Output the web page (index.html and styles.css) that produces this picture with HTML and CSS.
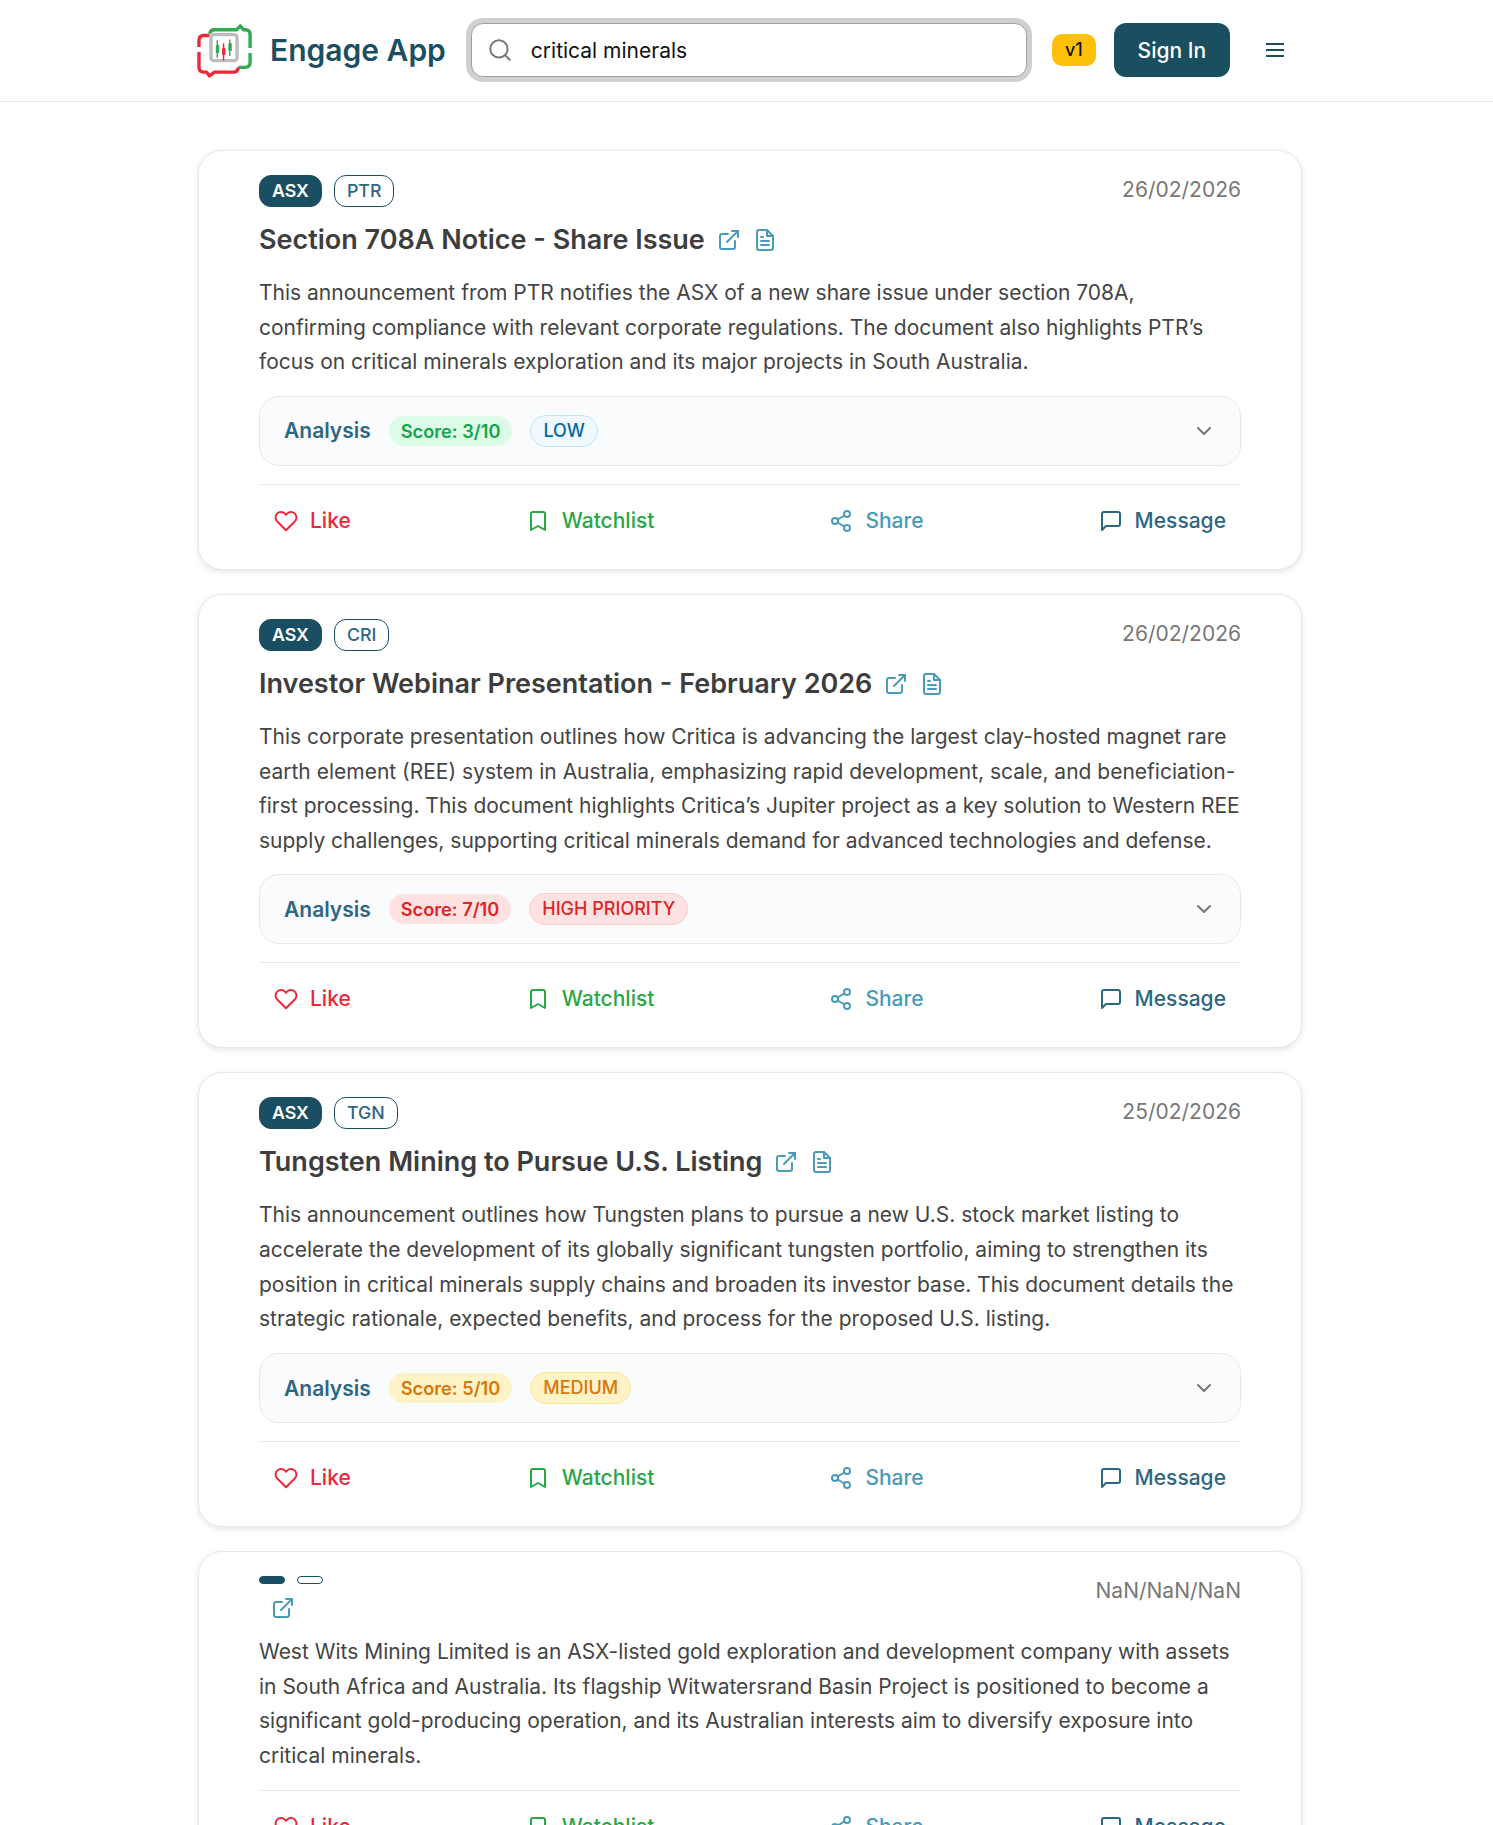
FILE: index.html
```html
<!DOCTYPE html>
<html lang="en">
<head>
    <meta charset="UTF-8">
    <meta name="viewport" content="width=device-width, initial-scale=1.0">
    <title>Engage App</title>
    <link rel="stylesheet" href="styles.css">
</head>
<body>
    <svg class="icon-defs" aria-hidden="true">
        <symbol id="i-external" viewBox="0 0 24 24"><path d="M18 13v6a2 2 0 0 1-2 2H5a2 2 0 0 1-2-2V8a2 2 0 0 1 2-2h6"/><path d="M15 3h6v6"/><path d="M10 14 21 3"/></symbol>
        <symbol id="i-doc" viewBox="0 0 24 24"><path d="M14 2H6a2 2 0 0 0-2 2v16a2 2 0 0 0 2 2h12a2 2 0 0 0 2-2V8z"/><path d="M14 2v6h6"/><path d="M8 13h8"/><path d="M8 17h8"/><path d="M8 9h2"/></symbol>
        <symbol id="i-heart" viewBox="0 0 24 24"><path d="M20.84 4.61a5.5 5.5 0 0 0-7.78 0L12 5.67l-1.06-1.06a5.5 5.5 0 0 0-7.78 7.78l1.06 1.06L12 21.23l7.78-7.78 1.06-1.06a5.5 5.5 0 0 0 0-7.78z"/></symbol>
        <symbol id="i-bookmark" viewBox="0 0 24 24"><path d="m19 21-7-4-7 4V5a2 2 0 0 1 2-2h10a2 2 0 0 1 2 2z"/></symbol>
        <symbol id="i-share" viewBox="0 0 24 24"><circle cx="18" cy="5" r="3"/><circle cx="6" cy="12" r="3"/><circle cx="18" cy="19" r="3"/><path d="m8.6 13.5 6.8 4"/><path d="m15.4 6.5-6.8 4"/></symbol>
        <symbol id="i-message" viewBox="0 0 24 24"><path d="M21 15a2 2 0 0 1-2 2H7l-4 4V5a2 2 0 0 1 2-2h14a2 2 0 0 1 2 2z"/></symbol>
        <symbol id="i-chevron" viewBox="0 0 24 24"><path d="m6 9 6 6 6-6"/></symbol>
    </svg>

    <header class="topbar">
        <div class="topbar-inner">
            <a class="brand" href="#">
                <svg class="logo" viewBox="0 0 56 56">
                    <path class="logo-green" d="M12 11 Q13 7 17 7 H40 L44 3 L47 7 H49 Q54 7 54 12 V26 M54 31 V41 Q54 46 49 46 H42"/>
                    <path class="logo-red" d="M42 46 Q41 51 37 51 H17 L12 55 L9 51 H6 Q1 51 1 46 V30 M1 25 V18 Q1 13 6 13 H12"/>
                    <rect class="logo-frame" x="13.5" y="12" width="27" height="27" rx="3"/>
                    <path class="logo-candle-green" d="M20 18 V36 M33 17 V34"/>
                    <path class="logo-candle-red" d="M26.500 21 V39"/>
                    <rect class="logo-body-green" x="18.500" y="23" width="3.500" height="8"/>
                    <rect class="logo-body-red" x="25" y="26" width="3.500" height="7"/>
                    <rect class="logo-body-green" x="31.500" y="21" width="3.500" height="8"/>
                </svg>
                <span class="brand-name">Engage App</span>
            </a>
            <div class="search">
                <svg class="search-icon" viewBox="0 0 24 24"><circle cx="11" cy="11" r="8"/><path d="m21 21-4.300-4.300"/></svg>
                <input class="search-input" type="text" value="critical minerals">
            </div>
            <span class="version">v1</span>
            <button class="signin">Sign In</button>
            <button class="menu" aria-label="Menu">
                <span></span><span></span><span></span>
            </button>
        </div>
    </header>

    <main class="feed">
        <article class="card">
            <div class="tags"><span class="tag tag-solid">ASX</span><span class="tag">PTR</span></div>
            <span class="date">26/02/2026</span>
            <h2 class="title">Section 708A Notice - Share Issue
                <svg class="title-icon"><use href="#i-external"/></svg>
                <svg class="title-icon"><use href="#i-doc"/></svg>
            </h2>
            <p class="summary">This announcement from PTR notifies the ASX of a new share issue under section 708A, confirming compliance with relevant corporate regulations. The document also highlights PTR’s focus on critical minerals exploration and its major projects in South Australia.</p>
            <div class="analysis">
                <span class="analysis-label">Analysis</span>
                <span class="score score-low">Score: 3/10</span>
                <span class="level level-low">LOW</span>
                <svg class="chevron"><use href="#i-chevron"/></svg>
            </div>
            <div class="actions">
                <button class="action like"><svg><use href="#i-heart"/></svg>Like</button>
                <button class="action watch"><svg><use href="#i-bookmark"/></svg>Watchlist</button>
                <button class="action share"><svg><use href="#i-share"/></svg>Share</button>
                <button class="action message"><svg><use href="#i-message"/></svg>Message</button>
            </div>
        </article>

        <article class="card">
            <div class="tags"><span class="tag tag-solid">ASX</span><span class="tag">CRI</span></div>
            <span class="date">26/02/2026</span>
            <h2 class="title">Investor Webinar Presentation - February 2026
                <svg class="title-icon"><use href="#i-external"/></svg>
                <svg class="title-icon"><use href="#i-doc"/></svg>
            </h2>
            <p class="summary">This corporate presentation outlines how Critica is advancing the largest clay-hosted magnet rare earth element (REE) system in Australia, emphasizing rapid development, scale, and beneficiation-first processing. This document highlights Critica’s Jupiter project as a key solution to Western REE supply challenges, supporting critical minerals demand for advanced technologies and defense.</p>
            <div class="analysis">
                <span class="analysis-label">Analysis</span>
                <span class="score score-high">Score: 7/10</span>
                <span class="level level-high">HIGH PRIORITY</span>
                <svg class="chevron"><use href="#i-chevron"/></svg>
            </div>
            <div class="actions">
                <button class="action like"><svg><use href="#i-heart"/></svg>Like</button>
                <button class="action watch"><svg><use href="#i-bookmark"/></svg>Watchlist</button>
                <button class="action share"><svg><use href="#i-share"/></svg>Share</button>
                <button class="action message"><svg><use href="#i-message"/></svg>Message</button>
            </div>
        </article>

        <article class="card">
            <div class="tags"><span class="tag tag-solid">ASX</span><span class="tag">TGN</span></div>
            <span class="date">25/02/2026</span>
            <h2 class="title">Tungsten Mining to Pursue U.S. Listing
                <svg class="title-icon"><use href="#i-external"/></svg>
                <svg class="title-icon"><use href="#i-doc"/></svg>
            </h2>
            <p class="summary">This announcement outlines how Tungsten plans to pursue a new U.S. stock market listing to accelerate the development of its globally significant tungsten portfolio, aiming to strengthen its position in critical minerals supply chains and broaden its investor base. This document details the strategic rationale, expected benefits, and process for the proposed U.S. listing.</p>
            <div class="analysis">
                <span class="analysis-label">Analysis</span>
                <span class="score score-medium">Score: 5/10</span>
                <span class="level level-medium">MEDIUM</span>
                <svg class="chevron"><use href="#i-chevron"/></svg>
            </div>
            <div class="actions">
                <button class="action like"><svg><use href="#i-heart"/></svg>Like</button>
                <button class="action watch"><svg><use href="#i-bookmark"/></svg>Watchlist</button>
                <button class="action share"><svg><use href="#i-share"/></svg>Share</button>
                <button class="action message"><svg><use href="#i-message"/></svg>Message</button>
            </div>
        </article>

        <article class="card">
            <div class="tags"><span class="tag tag-solid"></span><span class="tag"></span></div>
            <span class="date">NaN/NaN/NaN</span>
            <h2 class="title title-bare">
                <svg class="title-icon"><use href="#i-external"/></svg>
            </h2>
            <p class="summary">West Wits Mining Limited is an ASX-listed gold exploration and development company with assets in South Africa and Australia. Its flagship Witwatersrand Basin Project is positioned to become a significant gold-producing operation, and its Australian interests aim to diversify exposure into critical minerals.</p>
            <div class="actions">
                <button class="action like"><svg><use href="#i-heart"/></svg>Like</button>
                <button class="action watch"><svg><use href="#i-bookmark"/></svg>Watchlist</button>
                <button class="action share"><svg><use href="#i-share"/></svg>Share</button>
                <button class="action message"><svg><use href="#i-message"/></svg>Message</button>
            </div>
        </article>
    </main>
</body>
</html>
```

FILE: styles.css
```css
* {
    margin: 0;
    padding: 0;
    box-sizing: border-box;
}

html, body {
    height: 1825px;
    overflow: hidden;
}

body {
    background: #fff;
    color: #444;
    font-family: Inter, 'Noto Sans', sans-serif;
}

.icon-defs {
    display: none;
}

svg {
    fill: none;
    stroke: currentColor;
    stroke-width: 2;
    stroke-linecap: round;
    stroke-linejoin: round;
}

/* header */
.topbar {
    height: 102px;
    border-bottom: 1px solid #e8e8e8;
}

.topbar-inner {
    width: 1104px;
    height: 100px;
    margin-left: 198px;
    display: flex;
    align-items: center;
}

.brand {
    display: flex;
    align-items: center;
    gap: 18px;
    text-decoration: none;
}

.logo {
    width: 54px;
    height: 54px;
    overflow: visible;
    stroke-width: 3.500;
    stroke-linecap: butt;
}

.logo-green {
    stroke: #34a853;
}

.logo-red {
    stroke: #ee2737;
}

.logo-frame {
    stroke: #bdbdbd;
    stroke-width: 3.500;
}

.logo-candle-green {
    stroke: #34a853;
    stroke-width: 1.500;
}

.logo-candle-red {
    stroke: #ee2737;
    stroke-width: 1.500;
}

.logo-body-green {
    fill: #34a853;
    stroke: none;
}

.logo-body-red {
    fill: #ee2737;
    stroke: none;
}

.brand-name {
    font-size: 30px;
    font-weight: 600;
    color: #1a4f63;
}

.search {
    width: 556px;
    height: 54px;
    margin-left: 25px;
    display: flex;
    align-items: center;
    gap: 18px;
    padding: 0 15px;
    background: #fff;
    border: 1px solid #a0a0a0;
    border-radius: 12px;
    box-shadow: 0 0 0 5px #d0d0d0;
}

.search-icon {
    width: 26px;
    height: 26px;
    color: #777;
    flex-shrink: 0;
    stroke-width: 1.800;
}

.search-input {
    flex: 1;
    border: none;
    outline: none;
    background: none;
    font-family: inherit;
    font-size: 21px;
    color: #111;
}

.version {
    margin-left: 25px;
    width: 44px;
    height: 32px;
    border-radius: 10px;
    background: #ffc107;
    color: #111;
    font-size: 18px;
    font-weight: 500;
    line-height: 32px;
    text-align: center;
}

.signin {
    margin-left: 18px;
    width: 116px;
    height: 54px;
    border: none;
    border-radius: 12px;
    background: #1a4f5f;
    color: #fff;
    font-family: inherit;
    font-size: 21px;
    font-weight: 500;
}

.menu {
    margin-left: auto;
    width: 54px;
    height: 54px;
    padding: 0 18px;
    border: none;
    background: none;
    display: flex;
    flex-direction: column;
    justify-content: center;
    gap: 4px;
}

.menu span {
    display: block;
    height: 2px;
    background: #1a4f5f;
}

/* feed */
.feed {
    width: 1104px;
    margin-left: 198px;
    padding-top: 48px;
    display: flex;
    flex-direction: column;
    gap: 24px;
}

.card {
    position: relative;
    padding: 24px 60px 13px;
    background: #fff;
    border: 1px solid #e8e8e8;
    border-radius: 24px;
    box-shadow: 0 2px 6px rgba(0,0,0,0.1);
}

.tags {
    display: flex;
    gap: 12px;
}

.tag {
    padding: 3px 12px;
    border: 1px solid #1a4f63;
    border-radius: 12px;
    color: #2d6682;
    font-size: 17.800px;
    font-weight: 500;
    line-height: 24px;
}

.tag-solid {
    background: #1a4f63;
    color: #fff;
    font-weight: 600;
}

/* the date sits over the tag row, it takes no height */
.date {
    position: absolute;
    top: 24px;
    right: 60px;
    color: #777;
    font-size: 21px;
    line-height: 30px;
}

.title {
    margin: 13px 0 16px;
    display: flex;
    align-items: center;
    gap: 12px;
    color: #3d3d3d;
    font-size: 27px;
    font-weight: 600;
    line-height: 40px;
}

.title-bare {
    margin: 12px 0 15px;
    padding-left: 12px;
}

.title-icon {
    width: 24px;
    height: 24px;
    color: #4a9aba;
}

.summary {
    font-size: 21px;
    line-height: 1.65;
}

.analysis {
    height: 70px;
    margin-top: 16px;
    padding: 0 24px;
    display: flex;
    align-items: center;
    background: #fafbfc;
    border: 1px solid #e8e8e8;
    border-radius: 20px;
}

.analysis-label {
    margin-right: 18px;
    color: #2d6682;
    font-size: 21px;
    font-weight: 600;
}

.score {
    margin-right: 18px;
    padding: 0 12px;
    border-radius: 15px;
    font-size: 18.200px;
    font-weight: 600;
    line-height: 30px;
}

.score-low {
    background: #dcfce7;
    color: #16a34a;
}

.score-high {
    background: #fee2e2;
    color: #dc2626;
}

.score-medium {
    background: #fef3c7;
    color: #d97706;
}

.level {
    padding: 0 12px;
    border: 1px solid;
    border-radius: 16px;
    font-size: 18px;
    font-weight: 500;
    line-height: 30px;
}

.level-low {
    background: #f0f9ff;
    border-color: #bae6fd;
    color: #0369a1;
}

.level-high {
    background: #fee2e2;
    border-color: #fecaca;
    color: #dc2626;
}

.level-medium {
    background: #fef3c7;
    border-color: #fde68a;
    color: #d97706;
}

.chevron {
    width: 24px;
    height: 24px;
    margin-left: auto;
    color: #777;
}

.actions {
    margin-top: 18px;
    padding: 19px 15px 18px;
    display: flex;
    justify-content: space-between;
    border-top: 1px solid #e8e8e8;
}

.summary + .actions {
    margin-top: 16px;
}

.action {
    display: flex;
    align-items: center;
    gap: 12px;
    border: none;
    background: none;
    font-family: inherit;
    font-size: 21px;
    font-weight: 500;
    line-height: 34px;
}

.action svg {
    width: 24px;
    height: 24px;
}

.like {
    color: #ee2737;
}

.watch {
    color: #28a745;
}

.share {
    color: #4a9aba;
}

.message {
    color: #2d6682;
}
```
